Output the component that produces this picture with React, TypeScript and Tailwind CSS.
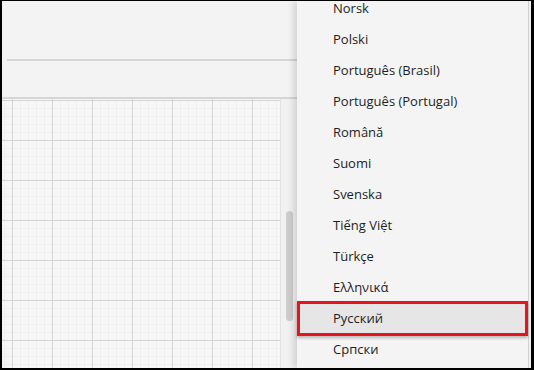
import React from "react";

const langs = [
  "Norsk",
  "Polski",
  "Português (Brasil)",
  "Português (Portugal)",
  "Română",
  "Suomi",
  "Svenska",
  "Tiếng Việt",
  "Türkçe",
  "Ελληνικά",
  "Русский",
  "Српски",
];

export default function App() {
  return (
    <div className="w-[534px] h-[370px] overflow-hidden bg-black pl-[2px] pt-[1px] pr-[3px] pb-[2px] font-['Open_Sans','Noto_Sans',sans-serif]">
      <div className="flex h-full w-full bg-[#f3f3f3]">
        {/* left workspace */}
        <div className="flex w-[295px] flex-col">
          <div className="h-[60px] border-b-2 border-[#d6d6d6] ml-[5px]" />
          <div className="h-[38px] border-b-2 border-[#d6d6d6]" />
          <div className="flex flex-1">
            <div className="w-[278px] bg-[#f7f7f7] bg-[linear-gradient(to_right,#d4d4d4_1px,transparent_1px),linear-gradient(to_bottom,#d4d4d4_1px,transparent_1px),linear-gradient(to_right,#f0f0f0_1px,transparent_1px),linear-gradient(to_bottom,#f0f0f0_1px,transparent_1px)] bg-[size:40px_40px,40px_40px,8px_8px,8px_8px] bg-[position:10px_41px,10px_41px,2px_1px,2px_1px]" />
            <div className="flex w-[17px] justify-center border-l border-[#e2e2e2] bg-[#f1f1f1]">
              <div className="mt-[112px] h-[110px] w-[7px] rounded-sm bg-[#cdcdcd]" />
            </div>
          </div>
        </div>
        {/* language menu */}
        <div className="relative w-[232px] border-r border-[#d0d0d0] bg-[#f4f4f4] shadow-[-4px_0_6px_rgba(0,0,0,0.12)]">
          <ul className="mt-[-8px] text-[13px] text-[#1e1e1e]">
            {langs.map((l) =>
              l === "Русский" ? (
                <li
                  key={l}
                  className="relative my-[-2px] flex h-[35px] items-center border-[3px] border-[#e8141c] bg-[#e6e6e6] pl-[33px] shadow-[0_2px_3px_rgba(0,0,0,0.25)]"
                >
                  {l}
                </li>
              ) : (
                <li key={l} className="flex h-[31px] items-center pl-[36px]">
                  {l}
                </li>
              )
            )}
          </ul>
        </div>
      </div>
    </div>
  );
}
